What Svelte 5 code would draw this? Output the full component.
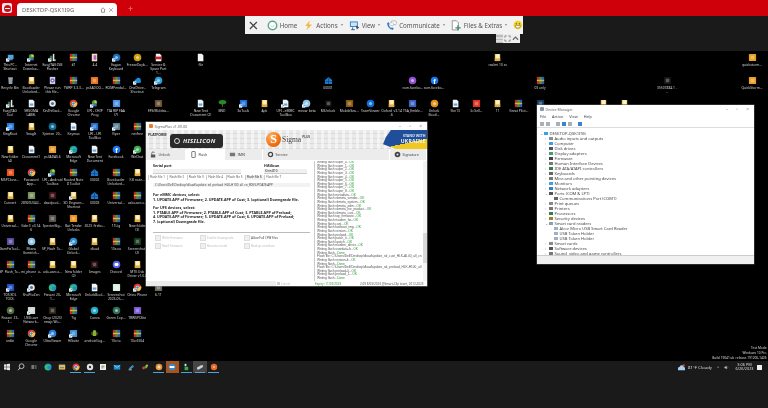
<script>
  const COL = 21.2;
  const ROW = 23.05;

  // first seven columns, row by row: kind|label
  const grid = [
    ["pc>|This PC - Shortcut","idm>|Internet Downloa...","easy>|EasyJTAG ISB Flasher","rar|#1","pink|4.4","c:#1a6fb5>|Eagan Keyboard","c:#caa012|FreezeDayb..."],
    ["bin|Recycle Bin","folder|Bootloader Unlocked...","disc|Please run this file...","rar|TWRP 3.3.3...","s:#e8711a|ps3ADOO...","rar|ROMPendal...","cloud>|OneDrive - Shortcut"],
    ["easy>|EasyJTAG Tool","doc|SRGOMA LABEL","gear|XinZhiGaol...","chrome|Google Chrome","idm>|UFI - CHIP Prog","s:#4a90e2|TIA RIP FAA (7)",""],
    ["s:#1c7fe0>|KingRoot","folder|SnagIt","c:#0b6f9e|Xpinten_20...","doc|Keymas","s:#1a6fd0>|UFI - UFI ToolBox","s:#5a7f95>|Viper","rar|netfree"],
    ["folder|New folder (4)","doc|Document1","s:#e89a2a|ps3ADAS.6","edge>|Microsoft Edge","doc|New Text Document","fb|Facebook","c:#3fae4a>|WeChat"],
    ["s:#e8501a|MSPClone...","chrome|Password App...","idm>|UFI - Android Toolbox","rar|Rooted Note 8 Toolkit","house|00002","rar|Bootloader Unlocked...","folder|Kill note..."],
    ["folder|Convert","s:#7a8f5a|28903U042...","s:#3a1015|deadpool...","folder>|SD Degrans - Shortcut","house|00003","rar|Universal...","rar|usb-user-s..."],
    ["folder|Universal...","rar|Gsbr3_v3.14.6","s:#55504a|SpecterBig...","s:#e8901a|Bat Tender Unlocks","folder|2023_firebo...","rar|11Lig","folder|New folder (3)"],
    ["s:#5a4a9a|GamFixTool...","c:#8fc5e8|Mixea Gsmtrick...","folder|SP_Flash_To...","c:#2a8fd0>|Global Unlock...","folder|dload","rar|10x.vu","s:#123a1c|Screenshot_ (2)"],
    ["rar|SP_Flash_To...","rar|mi_phone_u...","folder|usb-user-s...","folder|New folder (2)","s:#2a0d10|Images","discord|Discord","folder|MTK Usb Driver v1.0.8"],
    ["s:#1a4fc0>|TOS EDL TOOL","gear>|ShoPtoZen","edge|Fixsani_20-1...","edge>|Microsoft Edge","doc|UnlockBool...","s:#d8efe0|Screenshot 2023-05-...","chrome>|Chino Phone"],
    ["c:#4f6a40|Fixsani_23-1...","s:#cfd8d0>|USB user Network...","s:#2a2418|Chop (2023) newjs Wo...","rar|Tig","c:#23a8c8|Canva","c:#2f6f55|Green Cop...","s:#7a5ad0|TRWSPOlite"],
    ["rar|redbi","chrome|Google Chrome","c:#2a7fd8>|UltraViewer","s:#3a8fd0>|HiSuite","android|android log...","rar|10x to","rar|10x 6504"]
  ];

  // everything else on the desktop: column, row, kind, label
  const loose = [
    [7,0,"pdf","Service & Spare Part 1..."],[9,0,"white","file"],[23,0,"folder","realmi 10 ss"],[35,0,"s:#e8a020","quickstorm..."],
    [7,1,"c:#2a9fd8>","Telegram"],[15,1,"house","00001"],[19,1,"c:#9050d0","com.facebo..."],[20,1,"fb","com.facebo..."],[25,1,"rar","03 only"],[31,1,"s:#141414","35507884.1_..."],[35,1,"s:#e8a020","QuickStorm..."],
    [7,2,"s:#6a5030","EFS/Moldea..."],[9,2,"doc","New Text Document (2)"],[10,2,"tree","BND"],[11,2,"s:#1c6fd8>","3uTools"],[12,2,"folder","Apk"],[13,2,"doc>","UFI - eMMC ToolBox"],[14,2,"c:#8fc5e8>","meow_beta"],[15,2,"s:#0c0c0c","MiUnlock"],[16,2,"s:#8a5a10","MobileSea..."],[17,2,"c:#0e6fd8","TeamViewer"],[18,2,"folder","Oxford_v3.14.6"],[19,2,"s:#3a5fc0","TSA_Emble..."],[20,2,"c:#e8901a","Unlock Bootl..."],[21,2,"doc","5kn13"],
    [22,2,"s:#e03020","Io Sell..."],[23,2,"folder","11"],[24,2,"rar","Great Pilot..."],[25,2,"s:#143a60",""],[28,2,"folder",""],[29,2,"folder",""],
    [9,3,"s:#e8501a",""],[11,3,"folder",""],[12,3,"s:#e89a2a",""],
    [7,10,"s:#6a6a5a","6.11"]
  ];

  function parse(entry, c, r) {
    const i = entry.indexOf("|");
    let kind = entry.slice(0, i);
    const shortcut = kind.endsWith(">");
    if (shortcut) kind = kind.slice(0, -1);
    return { c, r, kind, shortcut, label: entry.slice(i + 1) };
  }

  const icons = [
    ...grid.flatMap((row, r) => row.map((e, c) => (e ? parse(e, c, r) : null)).filter(Boolean)),
    ...loose.map(([c, r, k, label]) => parse(k + "|" + label, c, r))
  ];

  const tree = [
    ["Audio inputs and outputs","#8a8f96"],["Computer","#3f9fe0"],["Disk drives","#555"],["Display adapters","#3f9f70"],["Firmware","#444"],["Human Interface Devices","#777"],["IDE ATA/ATAPI controllers","#2f7f4f"],["Keyboards","#666"],["Mice and other pointing devices","#777"],["Monitors","#3f9fe0"],["Network adapters","#3a7fc0"],["Ports (COM & LPT)","#555"],
    ["Communications Port (COM1)","#666",1],["Print queues","#888"],["Printers","#777"],["Processors","#2f7f4f"],["Security devices","#a08030"],["Smart card readers","#88a0b0"],
    ["Alcor Micro USB Smart Card Reader","#a0b0c0",1],["USB Token Holder","#a0b0c0",1],["USB Token Holder","#a0b0c0",1],["Smart cards","#888"],["Software devices","#555"],["Sound, video and game controllers","#777"]
  ];

  const log = [
    ["Writing flash super_0...","OK"],["Writing flash super_1...","OK"],["Writing flash super_2...","OK"],["Writing flash super_3...","OK"],["Writing flash super_4...","OK"],["Writing flash super_5...","OK"],["Writing flash super_6...","OK"],["Writing flash super_7...","OK"],["Writing flash super_8...","OK"],["Writing flash metadata...","OK"],["Writing flash vbmeta_vendor...","OK"],["Writing flash vbmeta_system...","OK"],["Writing flash vbmeta_odm...","OK"],["Writing flash vbmeta_hw_product...","OK"],["Writing flash vbmeta_cust...","OK"],["Writing flash top_firmware...","OK"],["Writing flash modem_fw...","OK"],["Writing flash cust...","OK"],["Writing flash fastboot_img...","OK"],["Writing flash version...","OK"],["Writing flash preload...","OK"],["Writing flash patch_ti...","OK"],["Writing flash kpatch...","OK"],["Writing flash modem_driver...","OK"],["Writing flash userdata-fr...","OK"],["Writing flash...","Done"],
    ["Flash file: C:\\Users\\Dell\\Desktop\\dload\\update_sd_cust_HLK-AL00_all_cn",""],["Writing flash version-fr...","OK"],["Writing flash...","Done"],
    ["Flash file: C:\\Users\\Dell\\Desktop\\dload\\update_sd_preload_HLK-H100_all",""],["Writing flash preload-0...","OK"],["Writing flash preload_1...","OK"],["Writing flash...","Done"]
  ];

  const flashTabs = [1, 2, 3, 4, 5, 6, 7];
  const checks = ["Write firmware","Enable downgrade","Allow Full CFW files","Read firmware","Resume mode","Backup userdata"];

  const taskbar = [
    { k: "win" },{ k: "search" },{ k: "view" },{ k: "edge" },{ k: "explorer" },{ k: "chrome", on: 1 },{ k: "gearw", on: 1 },{ k: "store" },{ k: "mail" },{ k: "py" },{ k: "multi" },
    { k: "orange", on: 1 },{ k: "tv", active: 1 },{ k: "green", on: 1 },{ k: "grey", on: 1, sel: 1 },{ k: "orange2", on: 1 }
  ];
</script>

{#snippet icon(kind, shortcut)}
  <svg class="ic" viewBox="0 0 10 10">
    {#if kind === "rar"}
      <rect x="1" y="1" width="8" height="8" fill="#7a2a8a" />
      <rect x="1" y="1" width="2.6" height="8" fill="#c42a2a" />
      <rect x="6.4" y="1" width="2.6" height="8" fill="#2a5fc0" />
      <rect x="3.6" y="1" width="2.8" height="8" fill="#3a9a3a" />
      <rect x="1" y="4.2" width="8" height="1.6" fill="#e0b030" />
    {:else if kind === "folder"}
      <rect x="2" y="1" width="6" height="8" rx=".5" fill="#f3cf6e" />
      <rect x="3.5" y="1.5" width="3.5" height="6" fill="#fdf3cf" />
      <rect x="2" y="6" width="6" height="3" fill="#e2ad3f" />
    {:else if kind === "doc" || kind === "white"}
      <path d="M2 .8h4.4L8.2 2.6V9.2H2z" fill="#f4f4f4" />
      {#if kind === "doc"}<rect x="3" y="5" width="4" height="2.4" fill="#5da5e0" />{/if}
    {:else if kind === "pdf"}
      <path d="M2 .8h4.4L8.2 2.6V9.2H2z" fill="#f4f4f4" />
      <rect x="1.6" y="4" width="6.8" height="3" fill="#d3202a" />
    {:else if kind === "pink"}
      <path d="M2 .8h6V9.2H2z" fill="#f0e2b0" />
      <rect x="4" y="2.5" width="3" height="5" fill="#b060d0" />
    {:else if kind === "chrome"}
      <circle cx="5" cy="5" r="4.2" fill="#e0402f" />
      <path d="M5 5L1.4 7.2A4.2 4.2 0 0 0 5 9.2z" fill="#3aa050" />
      <path d="M5 5V9.2A4.2 4.2 0 0 0 9 3.7z" fill="#f4c430" />
      <circle cx="5" cy="5" r="1.9" fill="#fff" /><circle cx="5" cy="5" r="1.4" fill="#3a80e0" />
    {:else if kind === "edge"}
      <circle cx="5" cy="5" r="4.2" fill="#1a8fc8" />
      <path d="M1 5.2C1.6 2 7.6 1 8.8 4.6 7.6 3.4 4.4 3.4 4 5.6 3.8 7.4 6 8.6 8 7.6 6.4 9.8 1.4 9.6 1 5.2z" fill="#35c16a" />
    {:else if kind === "fb"}
      <circle cx="5" cy="5" r="4.2" fill="#1877f2" />
      <text x="5" y="8.4" text-anchor="middle" font-size="8" font-weight="700" font-family="Liberation Sans" fill="#fff">f</text>
    {:else if kind === "discord"}
      <circle cx="5" cy="5" r="4.2" fill="#5865f2" />
      <rect x="2.8" y="3.4" width="4.4" height="3.2" rx="1.4" fill="#fff" />
    {:else if kind === "pc"}
      <rect x="2" y="2" width="6.4" height="4.6" fill="#4aa8e8" /><rect x="3" y="7" width="4.4" height="1" fill="#8ab8d8" />
    {:else if kind === "idm"}
      <circle cx="5" cy="4" r="3" fill="#3a9a50" /><circle cx="6" cy="3" r="1.4" fill="#e8c030" /><rect x="2.5" y="6.2" width="5" height="2" fill="#3a6fc0" />
    {:else if kind === "easy"}
      <rect x="2" y="3" width="3" height="6" fill="#3a7050" /><rect x="5.4" y="1" width="1.6" height="8" fill="#e8e8e8" /><rect x="7" y="7" width="1.4" height="2" fill="#e8e8e8" />
    {:else if kind === "bin"}
      <path d="M2.6 2.6h4.8L7 9H3z" fill="#8fa0ac" /><rect x="2.4" y="1.6" width="5.2" height="1.2" fill="#c4ced4" />
    {:else if kind === "disc"}
      <rect x="2" y="1" width="6" height="8" fill="#c8d4e8" /><circle cx="5" cy="5" r="2.4" fill="#8a60c0" /><circle cx="5" cy="5" r=".9" fill="#fff" />
    {:else if kind === "gear"}
      <circle cx="5" cy="5" r="3.6" fill="#e8e8e8" /><circle cx="5" cy="5" r="1.7" fill="#3a78b0" />
    {:else if kind === "cloud"}
      <circle cx="3.6" cy="5.6" r="2" fill="#1a8fe0" /><circle cx="6" cy="4.6" r="2.6" fill="#1a8fe0" /><rect x="2" y="5.6" width="6.6" height="2" fill="#1a8fe0" />
    {:else if kind === "house"}
      <path d="M5 1L9 4.4V9H1V4.4z" fill="#1a7ad0" /><rect x="1" y="5.6" width="8" height=".6" fill="#0e3f70" /><rect x="4.6" y="2" width=".8" height="7" fill="#0e3f70" />
    {:else if kind === "tree"}
      <rect x="4.4" y="5" width="1.2" height="4" fill="#6a4a20" /><ellipse cx="5" cy="3.6" rx="4.2" ry="2.4" fill="#2a8a20" />
    {:else if kind === "android"}
      <rect x="3" y="3.4" width="4" height="4.4" rx=".6" fill="#8ab030" /><path d="M3 3.2a2 2 0 0 1 4 0z" fill="#8ab030" /><rect x="1.8" y="3.6" width=".8" height="3" fill="#8ab030" /><rect x="7.4" y="3.6" width=".8" height="3" fill="#8ab030" />
    {:else if kind.startsWith("c:")}
      <circle cx="5" cy="5" r="4.2" fill={kind.slice(2)} /><circle cx="5" cy="5" r="1.7" fill="#ffffff" opacity=".55" />
    {:else if kind.startsWith("s:")}
      <rect x="1" y="1" width="8" height="8" rx=".6" fill={kind.slice(2)} /><rect x="3" y="3" width="4" height="4" fill="#ffffff" opacity=".3" />
    {/if}
    {#if shortcut}
      <rect x="0" y="6" width="3.6" height="3.6" fill="#fff" /><path d="M.8 8.8L2.8 6.8M1.6 6.8h1.2V8" stroke="#2a6fd0" stroke-width=".6" fill="none" />
    {/if}
  </svg>
{/snippet}

<div class="screen">
  <header class="tabbar">
    <div class="applogo"><span class="stop"></span></div>
    <div class="tab">
      <span class="tab-title">DESKTOP-QSK1I9G</span>
      <svg class="tab-ic" viewBox="0 0 8 8"><path d="M1 4L4 1l3 3M2 3.6V7h4V3.6" fill="none" stroke="#666" stroke-width=".9" /></svg>
      <svg class="tab-ic" viewBox="0 0 8 8"><path d="M1.5 1.5l5 5m0-5l-5 5" stroke="#888" stroke-width=".9" /></svg>
    </div>
    <span class="plus">+</span>
  </header>

  <div class="band"></div>

  <main class="desktop">
    {#each icons as it}
      <div class="di" style="left:{10 + it.c * COL - 10.5}px;top:{1.5 + it.r * ROW}px">
        {@render icon(it.kind, it.shortcut)}
        <span class="di-label">{it.label}</span>
      </div>
    {/each}

    <section class="sigma">
      <div class="titlebar">
        <span class="ticon orange"></span>
        <span class="ttext">SigmaPlus v1.09.00</span>
        <span class="wbtns"><i>–</i><i>▫</i><i>×</i></span>
      </div>

      <div class="sg-head">
        <span class="platform">PLATFORM</span>
        <div class="chip">
          <span class="chip-mark"></span>
          <span class="chip-name">HISILICON</span>
        </div>
        <div class="brand">
          <span class="ball">S</span>
          <span class="brand-name">Sigma</span>
          <span class="brand-plus">PLUS</span>
        </div>
        <div class="ukraine"><span>STAND WITH</span><b>UKRAINE</b></div>
      </div>

      <nav class="sg-tabs">
        <div class="st w40"><svg viewBox="0 0 8 8"><path d="M2 4V2.5a1.6 1.6 0 0 1 3-.6" fill="none" stroke="#555" /><rect x="1" y="4" width="5" height="3.4" fill="#555" /></svg>Unlock</div>
        <div class="st w39 on"><svg viewBox="0 0 8 8"><rect x="2" y=".6" width="4" height="6.8" rx=".6" fill="none" stroke="#444" stroke-width=".8" /></svg>Flash</div>
        <div class="st w38"><svg viewBox="0 0 8 8"><rect x="1" y="2" width="6" height="4" fill="#777" /></svg>IMEI</div>
        <div class="st grow"><svg viewBox="0 0 8 8"><circle cx="4" cy="4" r="2.4" fill="none" stroke="#444" stroke-width="1.4" /></svg>Service</div>
        <div class="st w37"><svg viewBox="0 0 8 8"><circle cx="4" cy="4" r="3.2" fill="#444" /><circle cx="4" cy="4" r="1.2" fill="#ddd" /></svg>Signature</div>
      </nav>

      <div class="sg-body">
        <div class="sg-left">
          <div class="ports">
            <div class="port-a"><b>Serial port</b><span class="field"></span></div>
            <div class="port-b"><b>HiSilicon</b><span class="field sel">Kirin 810</span></div>
          </div>
          <div class="ftabs">
            {#each flashTabs as n}
              <span class="ft" class:cur={n === 6}>Flash file {n}</span>
            {/each}
          </div>
          <div class="path">C:\Users\Dell\Desktop\dload\update_sd_preload_HLK-H100_all_cn_R05\UPDATE.APP</div>
          <div class="notes">
            <p>For eMMC devices, select:<br />1. UPDATE.APP of Firmware; 2. UPDATE.APP of Cust; 3. (optional) Downgrade file.</p>
            <p>For UFS devices, select:<br />1. PTABLE.APP of Firmware; 2. PTABLE.APP of Cust; 3. PTABLE.APP of Preload;<br />4. UPDATE.APP of Firmware; 5. UPDATE.APP of Cust; 6. UPDATE.APP of Preload;<br />7. (optional) Downgrade file.</p>
          </div>
          <div class="checks">
            {#each checks as c, i}
              <span class="chk" class:live={i === 2}><i></i>{c}</span>
            {/each}
          </div>
        </div>

        <div class="sg-log">
          <div class="log-lines">
            {#each log as [a, b]}
              <div>{a}<em>{b}</em></div>
            {/each}
          </div>
          <div class="scroll"><span></span></div>
        </div>
      </div>

      <footer class="sg-foot">
        <div class="progress"></div>
        <span class="cancel"><i></i>Cancel</span>
        <span class="expiry">Expiry: 11/29/2023</span>
        <span class="credit">2.09 6/03/2023 @Smart-Clip team, 2012-2023</span>
      </footer>
    </section>

    <section class="devmgr">
      <div class="titlebar">
        <span class="ticon grey"></span>
        <span class="ttext">Device Manager</span>
        <span class="wbtns"><i>–</i><i>▫</i><i>×</i></span>
      </div>
      <div class="dm-menu"><span>File</span><span>Action</span><span>View</span><span>Help</span></div>
      <div class="dm-tools">
        <i class="g"></i><i class="g"></i><i class="sp"></i><i class="g"></i><i class="b"></i><i class="g"></i><i class="sp"></i><i class="b"></i>
      </div>
      <div class="dm-tree">
        <div class="dm-root"><span class="twist">⌄</span><span class="node" style="background:#3f9fe0"></span>DESKTOP-QSK1I9G</div>
        {#each tree as [name, color, child]}
          <div class="dm-row" class:child>
            <span class="twist">{child ? "" : name === "Ports (COM & LPT)" || name === "Smart card readers" ? "⌄" : "›"}</span>
            <span class="node" style="background:{color}"></span>{name}
          </div>
        {/each}
      </div>
      <div class="dm-status"></div>
    </section>

    <div class="watermark">
      <span>Test Mode</span><span>Windows 10 Pro</span><span>Build 19041.vb_release.191206-1406</span>
    </div>
  </main>

  <footer class="taskbar">
    <div class="tasks">
      {#each taskbar as t}
        <div class="task {t.k}" class:on={t.on} class:active={t.active} class:sel={t.sel}>
          <svg viewBox="0 0 8 8">
            {#if t.k === "win"}
              <path d="M1 1.6L3.6 1.2V3.8H1zM4 1.1L7 .7V3.8H4zM1 4.2H3.6V6.8L1 6.4zM4 4.2H7V7.3L4 6.9z" fill="#e8e8e8" />
            {:else if t.k === "search"}
              <circle cx="4.6" cy="3.2" r="2.4" fill="none" stroke="#ddd" stroke-width=".8" /><path d="M3 5L1 7.2" stroke="#ddd" stroke-width=".9" />
            {:else if t.k === "view"}
              <rect x="1.4" y="2" width="2.6" height="4" fill="#777" /><rect x="4.6" y="2" width="2" height="4" fill="#555" />
            {:else if t.k === "edge"}
              <circle cx="4" cy="4" r="3.5" fill="#1a8fc8" /><path d="M.6 4C1 1.4 6 .6 7.4 3.6 6 2.8 3.6 2.8 3.2 4.6 3 6 4.8 7 6.6 6.2 5 8 1 7.8.6 4z" fill="#35c16a" />
            {:else if t.k === "explorer"}
              <rect x=".8" y="1.6" width="6.4" height="5" fill="#e8bc50" /><rect x="2" y="4" width="4" height="1.2" fill="#4a90d0" />
            {:else if t.k === "chrome"}
              <circle cx="4" cy="4" r="3.5" fill="#e0402f" /><path d="M4 4L1 5.8A3.5 3.5 0 0 0 4 7.5z" fill="#3aa050" /><path d="M4 4V7.5A3.5 3.5 0 0 0 7.3 3z" fill="#f4c430" /><circle cx="4" cy="4" r="1.5" fill="#3a80e0" stroke="#fff" stroke-width=".5" />
            {:else if t.k === "gearw"}
              <circle cx="4" cy="4" r="3.2" fill="#e4e4e4" /><circle cx="4" cy="4" r="1.2" fill="#333" />
            {:else if t.k === "store"}
              <rect x="1" y="1" width="6" height="6" fill="#f0f0f0" /><rect x="2.6" y="2.6" width="1.2" height="1.2" fill="#e0402f" /><rect x="4.2" y="2.6" width="1.2" height="1.2" fill="#3aa050" /><rect x="2.6" y="4.2" width="1.2" height="1.2" fill="#3a80e0" /><rect x="4.2" y="4.2" width="1.2" height="1.2" fill="#f4c430" />
            {:else if t.k === "mail"}
              <rect x=".8" y="2" width="6.4" height="4.6" fill="#1a90d8" /><path d="M.8 2.4L4 4.4l3.2-2" fill="none" stroke="#bfe4fa" stroke-width=".6" />
            {:else if t.k === "py"}
              <path d="M1.6 5.6L5.6 2 7 3.6 3.6 6.4z" fill="#3a8fd0" /><path d="M1.6 6.8h3.2" stroke="#ddd" stroke-width=".8" />
            {:else if t.k === "multi"}
              <circle cx="2.6" cy="5" r="1.4" fill="#d04040" /><circle cx="5" cy="4" r="1.4" fill="#50b050" /><circle cx="6" cy="2.6" r="1.1" fill="#e8b030" />
            {:else if t.k === "orange"}
              <circle cx="4" cy="4" r="3.3" fill="#e8923a" /><circle cx="4" cy="4" r="1.5" fill="#f6e0c0" />
            {:else if t.k === "tv"}
              <circle cx="4" cy="4" r="3.3" fill="#2a8fe0" /><rect x="1.6" y="3" width="4.8" height="2" fill="#fff" />
            {:else if t.k === "green"}
              <rect x="2.6" y=".8" width="1.8" height="2.4" fill="#ddd" /><rect x="2.6" y="3.8" width="3.6" height="3.4" fill="#2fb04a" />
            {:else if t.k === "grey"}
              <path d="M1 4.6L5 2.2h2V4L3 6.4H1z" fill="#cfcfcf" />
            {:else}
              <circle cx="4" cy="4" r="3.2" fill="#e8682a" /><circle cx="4" cy="4" r="1" fill="#f5c9a6" />
            {/if}
          </svg>
        </div>
      {/each}
    </div>

    <div class="tray">
      <svg class="weather" viewBox="0 0 10 8"><circle cx="7.6" cy="1.6" r="1.3" fill="#e04030" /><path d="M1 7V5a2 2 0 0 1 2-2 2.4 2.4 0 0 1 4.4 0A2 2 0 0 1 9 5v2z" fill="#a8cff0" /></svg>
      <span class="temp">81°F Cloudy</span>
      <span class="chev">^</span>
      <svg class="spk" viewBox="0 0 6 6"><path d="M.6 2h1.2L3.2 1v4L1.8 4H.6z" fill="#ccc" /><path d="M4 1.8a1.6 1.6 0 0 1 0 2.4" fill="none" stroke="#ccc" stroke-width=".4" /></svg>
      <span class="clock"><span>3:06 PM</span><span>6/26/2023</span></span>
      <span class="notif"></span>
    </div>
  </footer>

  <div class="remote-bar">
    <svg class="rb-x" viewBox="0 0 10 10"><path d="M1 1l8 8m0-8l-8 8" stroke="#444" stroke-width="1.4" /></svg>
    <div class="rb-item home">
      <svg viewBox="0 0 12 12"><circle cx="6" cy="6" r="4.6" fill="#fff" stroke="#5aa88a" stroke-width="1.6" /><path d="M4 6l2 1.4L8 6" stroke="#bbb" stroke-width=".8" fill="none" /></svg>
      <span>Home</span>
    </div>
    <div class="rb-item">
      <svg viewBox="0 0 12 12"><path d="M7.6.6L2.4 6.6h3L3.6 11.4 9.8 4.8H6.4z" fill="#f0b840" /></svg>
      <span>Actions</span><i class="caret"></i>
    </div>
    <div class="rb-item">
      <svg viewBox="0 0 12 12"><rect x="1" y="1.6" width="8.6" height="6" fill="#2f7fd0" /><rect x="2" y="2.6" width="6.6" height="4" fill="#cfe5f7" /><path d="M4 8v2.4M2.4 10.6h4" stroke="#2f5f90" /><path d="M7.4 6l3.6 2-2.4 2.4z" fill="#444" /></svg>
      <span>View</span><i class="caret"></i>
    </div>
    <div class="rb-item">
      <svg viewBox="0 0 12 12"><path d="M1.2 3.4c0 4 3 7.2 6.4 7.4l.8-1.8-2-1-.8.8C4.4 8 3.4 6.6 3 5.2l1-.7L3 2.4z" fill="#2f7fd0" /><rect x="5.6" y="1" width="5.6" height="4" rx=".8" fill="#fff" stroke="#999" stroke-width=".7" /><rect x="4.2" y="3" width="4" height="3" rx=".6" fill="#fff" stroke="#aaa" stroke-width=".6" /></svg>
      <span>Communicate</span><i class="caret"></i>
    </div>
    <div class="rb-item">
      <svg viewBox="0 0 12 12"><path d="M1.4 .8h4.4L8 3v7.8H1.4z" fill="#fff" stroke="#666" stroke-width=".7" /><path d="M8.4 5.6v2.2h2.2v1.4H8.4v2.2H7V9.2H4.8V7.8H7V5.6z" fill="#3f8f6a" /></svg>
      <span>Files &amp; Extras</span><i class="caret"></i>
    </div>
    <svg class="rb-smile" viewBox="0 0 10 10"><circle cx="5" cy="5" r="4.4" fill="#f5d020" /><circle cx="3.4" cy="3.8" r=".6" fill="#333" /><circle cx="6.6" cy="3.8" r=".6" fill="#333" /><path d="M2.4 5.6h5.2a2.6 2.6 0 0 1-5.2 0z" fill="#fff" stroke="#333" stroke-width=".4" /></svg>
  </div>

  <div class="remote-toggle">
    <span class="grip"></span>
    <svg viewBox="0 0 8 8"><path d="M1 3V1h2M5 1h2v2M7 5v2H5M3 7H1V5" fill="none" stroke="#666" stroke-width=".8" /></svg>
    <svg viewBox="0 0 8 8"><path d="M1 5.4L4 2.4l3 3" fill="none" stroke="#666" stroke-width="1.3" /></svg>
  </div>
</div>

<style>
  :global(body) {
    background: #000;
    overflow: hidden;
  }

  .screen {
    position: relative;
    width: 768px;
    height: 408px;
    display: flex;
    flex-direction: column;
    overflow: hidden;
    background: #1a1a1a;
    font-family: "Noto Sans", "Liberation Sans", sans-serif;
    filter: blur(0.35px);
  }

  /* browser-like tab strip */
  .tabbar {
    height: 16px;
    flex: none;
    display: flex;
    align-items: flex-end;
    background: #d0000b;
  }

  .applogo {
    width: 10px;
    height: 10px;
    margin: 0 5px 3px 2px;
    border-radius: 2px;
    background: #f6e8e8;
    display: flex;
    align-items: center;
    justify-content: center;
  }

  .stop {
    width: 7px;
    height: 7px;
    border-radius: 50%;
    background: #c8101a;
    position: relative;
  }

  .stop::after {
    content: "";
    position: absolute;
    left: 1px;
    right: 1px;
    top: 3px;
    height: 1px;
    background: #fff;
  }

  .tab {
    width: 100px;
    height: 13px;
    box-sizing: border-box;
    padding: 0 3px 0 5px;
    display: flex;
    align-items: center;
    gap: 2px;
    border-radius: 4px 4px 0 0;
    background: #fff;
  }

  .tab-title {
    flex: 1;
    font-size: 5.9px;
    color: #666;
  }

  .tab-ic {
    width: 6px;
    height: 6px;
  }

  .plus {
    margin: 0 0 2px 11px;
    color: #ee8b8b;
    font-size: 9px;
    line-height: 10px;
  }

  .band {
    height: 35px;
    flex: none;
    background: #1a1a1a;
  }

  .desktop {
    position: relative;
    height: 310px;
    flex: none;
    background: #000;
  }

  /* desktop icons sit on a free canvas */
  .di {
    position: absolute;
    width: 21px;
    display: flex;
    flex-direction: column;
    align-items: center;
  }

  .ic {
    width: 9px;
    height: 9px;
    flex: none;
  }

  .di-label {
    width: 21px;
    text-align: center;
    font-size: 3.3px;
    line-height: 4px;
    color: #d8d8d8;
    margin-top: 1px;
    overflow-wrap: anywhere;
  }

  .titlebar {
    height: 8px;
    flex: none;
    display: flex;
    align-items: center;
    padding: 0 3px;
    background: #fff;
    font-size: 3.6px;
    color: #666;
  }

  .ticon {
    width: 3.5px;
    height: 3.5px;
    margin-right: 2px;
    border-radius: 1px;
  }

  .ticon.orange {
    background: #ec7a2a;
  }

  .ticon.grey {
    background: #8796a8;
  }

  .ttext {
    flex: 1;
  }

  .wbtns {
    display: flex;
    gap: 8px;
    padding-right: 2px;
    font-size: 5px;
    color: #999;
  }

  .wbtns i {
    font-style: normal;
  }

  /* SigmaPlus window */
  .sigma {
    position: absolute;
    left: 146px;
    top: 71px;
    width: 281px;
    height: 164px;
    display: flex;
    flex-direction: column;
    background: #fff;
    box-shadow: 0 0 0 0.5px #888;
  }

  .sg-head {
    position: relative;
    height: 19px;
    flex: none;
    display: flex;
    align-items: center;
    background:
      repeating-linear-gradient(90deg, rgba(255, 255, 255, 0.5) 0 3px, transparent 3px 7px),
      repeating-linear-gradient(0deg, rgba(190, 190, 190, 0.35) 0 1px, transparent 1px 5px),
      #e9e9e9;
  }

  .platform {
    position: absolute;
    left: 2px;
    top: 1.5px;
    font-size: 3.5px;
    font-weight: 700;
    color: #333;
  }

  .chip {
    width: 53px;
    height: 14px;
    margin: 3px 0 0 24px;
    box-sizing: border-box;
    border-radius: 3px;
    background: #2a2a2a;
    display: flex;
    align-items: center;
    gap: 3px;
    padding-left: 4px;
  }

  .chip-mark {
    width: 4px;
    height: 4px;
    border-radius: 50%;
    border: 1px solid #ddd;
  }

  .chip-name {
    font-size: 6px;
    font-weight: 700;
    font-style: italic;
    letter-spacing: 0.3px;
    color: #f0f0f0;
  }

  .brand {
    margin-left: 43px;
    display: flex;
    align-items: center;
  }

  .ball {
    width: 15px;
    height: 15px;
    border-radius: 50%;
    background: radial-gradient(circle at 35% 30%, #ffb56a, #f07010 60%, #c85408);
    color: #fff;
    font-family: "Liberation Serif", serif;
    font-size: 12px;
    font-weight: 700;
    text-align: center;
    line-height: 15px;
  }

  .brand-name {
    margin-left: 1px;
    font-family: "Liberation Serif", serif;
    font-size: 7.5px;
    color: #444;
  }

  .brand-plus {
    font-size: 3.2px;
    font-weight: 700;
    color: #555;
    margin: -6px 0 0 1px;
  }

  .ukraine {
    position: absolute;
    right: 0;
    top: 0;
    width: 44px;
    height: 19px;
    display: flex;
    flex-direction: column;
    align-items: flex-end;
    padding: 3.5px 1.5px 0 0;
    box-sizing: border-box;
    background: linear-gradient(168deg, #1f4f9a 0 64%, #f1c91e 64%);
    clip-path: polygon(18% 0, 100% 0, 100% 100%, 30% 100%, 0 75%, 6% 40%);
    color: #f4f4f4;
  }

  .ukraine span {
    font-size: 3.6px;
    line-height: 4.5px;
    font-weight: 700;
    color: #dfe6f0;
  }

  .ukraine b {
    font-size: 5px;
    line-height: 6px;
    letter-spacing: 0.3px;
  }

  .sg-tabs {
    height: 11px;
    flex: none;
    display: flex;
    background: #ececec;
    font-size: 3.6px;
    color: #444;
  }

  .st {
    display: flex;
    align-items: center;
    gap: 1.5px;
    padding-left: 4px;
    box-sizing: border-box;
    border-right: 0.5px solid #fff;
  }

  .st svg {
    width: 7px;
    height: 7px;
  }

  .w40 { width: 40px; }
  .w39 { width: 39px; }
  .w38 { width: 38px; }
  .w37 { width: 37px; }
  .grow { flex: 1; }

  .st.on {
    background: #fff;
  }

  .sg-body {
    flex: 1;
    min-height: 0;
    display: flex;
  }

  .sg-left {
    width: 168px;
    flex: none;
    box-sizing: border-box;
    padding: 3px 4px 0 2px;
    font-size: 3.6px;
    color: #222;
  }

  .ports {
    display: flex;
    padding-left: 5px;
    height: 11px;
  }

  .port-a {
    width: 111px;
    display: flex;
    flex-direction: column;
  }

  .port-b {
    width: 44px;
    display: flex;
    flex-direction: column;
  }

  .ports b {
    line-height: 5px;
  }

  .field {
    display: block;
    width: 87px;
    height: 4.5px;
    margin-top: 0.5px;
    background: #f0f0f0;
    border-bottom: 0.5px solid #ccc;
    font-size: 3px;
    line-height: 4.5px;
    padding-left: 1px;
  }

  .field.sel {
    width: 42px;
  }

  .ftabs {
    display: flex;
    height: 5px;
    margin-top: 1px;
    align-items: center;
  }

  .ft {
    width: 19.4px;
    flex: none;
    box-sizing: border-box;
    padding-left: 1px;
    font-size: 3px;
    color: #555;
    border-left: 0.5px solid #ccc;
    line-height: 4.5px;
    white-space: nowrap;
  }

  .ft.cur {
    background: #f2f2f2;
    color: #222;
  }

  .path {
    margin: 2.5px 0 0 5px;
    height: 4.5px;
    background: #f2f2f2;
    font-size: 3px;
    line-height: 4.5px;
    color: #444;
    padding-left: 2px;
    white-space: nowrap;
    overflow: hidden;
  }

  .notes {
    height: 39px;
    margin: 6px 0 0 5px;
    font-size: 3.7px;
    font-weight: 700;
    line-height: 4.5px;
    color: #222;
    border-bottom: 0.5px solid #bbb;
    white-space: nowrap;
  }

  .notes p {
    margin: 0 0 4px;
  }

  .checks {
    display: grid;
    grid-template-columns: 45px 44px 60px;
    row-gap: 2.5px;
    margin: 2px 0 0 7px;
    font-size: 3px;
    color: #c0c0c0;
  }

  .chk {
    display: flex;
    align-items: center;
    gap: 1.5px;
    line-height: 4px;
  }

  .chk i {
    width: 3.5px;
    height: 3.5px;
    background: #f0f0f0;
    border: 0.3px solid #ddd;
  }

  .chk.live {
    color: #444;
  }

  .sg-log {
    flex: 1;
    min-width: 0;
    display: flex;
    border-left: 0.5px solid #ccc;
    margin-top: 1px;
    padding-left: 2px;
  }

  .log-lines {
    flex: 1;
    min-width: 0;
    overflow: hidden;
    font-family: "Liberation Sans", sans-serif;
    font-size: 3.2px;
    line-height: 3.63px;
    color: #555;
    white-space: nowrap;
  }

  .log-lines em {
    font-style: normal;
    color: #1f9a2f;
  }

  .scroll {
    width: 4px;
    flex: none;
    display: flex;
    align-items: flex-end;
    background: #f3f3f3;
  }

  .scroll span {
    display: block;
    width: 100%;
    height: 30px;
    margin-bottom: 18px;
    background: #d8d8d8;
  }

  .sg-foot {
    height: 5px;
    flex: none;
    display: flex;
    align-items: center;
    font-size: 3px;
    background: #fff;
  }

  .progress {
    width: 130px;
    height: 100%;
    background: #ececec;
  }

  .cancel {
    display: flex;
    align-items: center;
    gap: 1px;
    width: 38px;
    margin-left: 1px;
    color: #bbb;
  }

  .cancel i {
    width: 3px;
    height: 3px;
    background: #ccc;
  }

  .expiry {
    width: 45px;
    color: #2a9a3a;
  }

  .credit {
    flex: 1;
    color: #555;
    white-space: nowrap;
  }

  /* Device Manager window */
  .devmgr {
    position: absolute;
    left: 537px;
    top: 54px;
    width: 217px;
    height: 159px;
    display: flex;
    flex-direction: column;
    background: #fff;
    box-shadow: 0 0 0 0.5px #555;
  }

  .dm-menu {
    height: 7px;
    flex: none;
    display: flex;
    align-items: center;
    gap: 6px;
    padding-left: 3px;
    font-size: 3.8px;
    color: #444;
  }

  .dm-tools {
    height: 7px;
    flex: none;
    display: flex;
    align-items: center;
    gap: 2px;
    padding-left: 3px;
    border-bottom: 0.5px solid #ddd;
  }

  .dm-tools i {
    width: 4px;
    height: 4px;
  }

  .dm-tools .g { background: #a8b0b8; }
  .dm-tools .b { background: #3f80d0; }
  .dm-tools .sp { width: 2px; }

  .dm-tree {
    flex: 1;
    min-height: 0;
    overflow: hidden;
    padding-top: 3px;
    font-size: 4.1px;
    color: #444;
    white-space: nowrap;
  }

  .dm-root,
  .dm-row {
    height: 5px;
    display: flex;
    align-items: center;
  }

  .dm-root {
    padding-left: 3px;
  }

  .dm-row {
    padding-left: 8px;
  }

  .dm-row.child {
    padding-left: 13px;
  }

  .twist {
    width: 4px;
    flex: none;
    font-size: 3.5px;
    color: #888;
  }

  .node {
    width: 3.5px;
    height: 3.5px;
    margin-right: 2px;
    flex: none;
  }

  .dm-status {
    height: 8px;
    flex: none;
    background: #f0f0f0;
    border-top: 0.5px solid #ccc;
  }

  .watermark {
    position: absolute;
    right: 1.5px;
    bottom: 0;
    display: flex;
    flex-direction: column;
    align-items: flex-end;
    font-size: 3.2px;
    line-height: 5px;
    color: #d8d8d8;
  }

  .taskbar {
    flex: 1;
    display: flex;
    justify-content: space-between;
    align-items: flex-start;
    background: #1a1a1a;
  }

  .tasks {
    display: flex;
  }

  .task {
    position: relative;
    width: 13.8px;
    height: 12px;
    display: flex;
    align-items: center;
    justify-content: center;
  }

  .task svg {
    width: 8px;
    height: 8px;
  }

  .task.on::after {
    content: "";
    position: absolute;
    left: 1.5px;
    right: 1.5px;
    bottom: 0.5px;
    height: 0.8px;
    background: #4ea3dc;
  }

  .task.active {
    background: #a8541a;
  }

  .task.sel {
    background: #454545;
  }

  .tray {
    display: flex;
    align-items: center;
    height: 12px;
    color: #ddd;
    font-size: 4px;
  }

  .weather {
    width: 9px;
    height: 7px;
    margin-right: 2px;
  }

  .temp {
    width: 29px;
    font-size: 4.3px;
  }

  .chev {
    width: 7px;
  }

  .spk {
    width: 5px;
    height: 5px;
    margin-right: 5px;
  }

  .clock {
    width: 21px;
    display: flex;
    flex-direction: column;
    align-items: center;
    line-height: 4.5px;
    font-size: 3.8px;
  }

  .notif {
    width: 5px;
    height: 5px;
    margin: 0 6px 0 2px;
    background: #eee;
  }

  /* floating remote-session toolbar */
  .remote-bar {
    position: absolute;
    left: 245px;
    top: 16px;
    width: 278px;
    height: 18px;
    box-sizing: border-box;
    padding-left: 4px;
    display: flex;
    align-items: center;
    gap: 6px;
    background: #f2f2f2;
    font-size: 6.2px;
    color: #555;
  }

  .rb-x {
    width: 9px;
    height: 9px;
    margin-right: 3px;
  }

  .rb-item {
    display: flex;
    align-items: center;
    gap: 2px;
    white-space: nowrap;
  }

  .rb-item svg {
    width: 11px;
    height: 11px;
  }

  .caret {
    width: 0;
    height: 0;
    margin-left: 1px;
    border: 1.5px solid transparent;
    border-top: 2px solid #888;
    border-bottom: 0;
  }

  .rb-smile {
    width: 10px;
    height: 10px;
    margin-left: 0;
  }

  .remote-toggle {
    position: absolute;
    left: 496px;
    top: 34px;
    width: 24px;
    height: 9px;
    display: flex;
    align-items: center;
    gap: 1px;
    background: #eee;
  }

  .grip {
    width: 7px;
    height: 100%;
    background: repeating-linear-gradient(0deg, #bbb 0 0.5px, #ddd 0.5px 1.5px);
  }

  .remote-toggle svg {
    width: 7px;
    height: 7px;
  }
</style>
